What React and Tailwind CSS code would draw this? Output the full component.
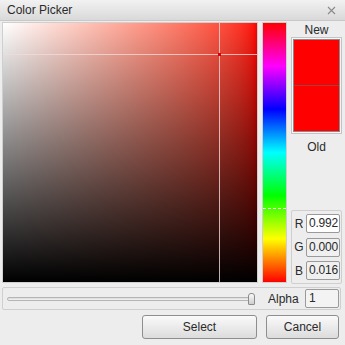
export default function App() {
  return (
    <div className="w-[345px] h-[345px] bg-[#ededed] flex flex-col text-[12px] text-[#2a2a2a] overflow-hidden" style={{ fontFamily: '"Liberation Sans", Arial, sans-serif' }}>
      {/* title bar */}
      <div className="h-[21px] flex items-center justify-between px-[7px] bg-gradient-to-b from-[#f2f2f2] to-[#d9d9d9] border-b border-[#c8c8c8]">
        <span className="text-[12px] text-[#2a2a2a]">Color Picker</span>
        <svg width="9" height="9" viewBox="0 0 9 9" className="mr-[2px]">
          <path d="M1 1L8 8M8 1L1 8" stroke="#8a8a8a" strokeWidth="1.1" />
        </svg>
      </div>

      <div className="flex mt-[1px] pl-[2px]">
        {/* saturation / value square */}
        <div className="border border-[#cfcfcf]">
          <div className="relative w-[254px] h-[259px] bg-gradient-to-r from-white to-[#ff0000]">
            <div className="absolute inset-0 bg-gradient-to-b from-transparent to-black" />
            <div className="absolute left-[216px] top-0 bottom-0 w-[1px] bg-[#f3dada]/80" />
            <div className="absolute top-[31px] left-0 right-0 h-[1px] bg-[#f3dada]/80" />
            <div className="absolute left-[215px] top-[30px] w-[3px] h-[3px] bg-[#dd0000]" />
          </div>
        </div>

        {/* hue bar */}
        <div className="ml-[4px] border border-[#cfcfcf]">
          <div className="relative w-[23px] h-[259px] bg-[linear-gradient(to_bottom,#ff0000_0%,#ff00ff_16.67%,#0000ff_33.33%,#00ffff_50%,#00ff00_66.67%,#ffff00_83.33%,#ff0000_100%)]">
            <div className="absolute top-[185px] left-0 right-0 h-[1px] border-t border-dashed border-white/90" />
          </div>
        </div>

        {/* right column */}
        <div className="ml-[4px] w-[51px] flex flex-col">
          <div className="text-center h-[14px] leading-[14px] mt-[1px]">New</div>
          <div className="border border-[#c4c4c4] bg-[#f6f6f6] p-[1px] h-[97px] flex flex-col">
            <div className="flex-1 bg-[#ff0000] border border-[#8a8a8a] flex flex-col">
              <div className="flex-1 bg-[#fe0000]" />
              <div className="h-[1px] bg-[#a04040]" />
              <div className="flex-1 bg-[#ff0000]" />
            </div>
          </div>
          <div className="text-center mt-[4px]">Old</div>

          <div className="mt-auto mb-[-1px] h-[74px] border border-[#cfcfcf] rounded-[2px] flex flex-col justify-between py-[3px] pr-[1px]">
            {[['R', '0.992', true], ['G', '0.000', false], ['B', '0.016', false]].map(([l, v, w]) => (
              <div key={l} className="flex items-center">
                <span className="w-[14px] text-center text-[12px]">{l}</span>
                <div className={`w-[34px] h-[19px] border border-[#9a9a9a] rounded-[2px] pl-[2px] leading-[17px] text-[12px] tracking-[-0.2px] ${w ? 'bg-white' : 'bg-[#f0f0f0]'}`}>{v}</div>
              </div>
            ))}
          </div>
        </div>
      </div>

      {/* alpha row */}
      <div className="mt-[4px] mx-[2px] w-[339px] h-[23px] border border-[#cfcfcf] rounded-[2px] flex items-center pl-[4px] pr-[1px]">
        <div className="relative w-[244px] h-[14px] flex items-center">
          <div className="w-full h-[4px] rounded-full border border-[#b5b5b5] bg-gradient-to-b from-[#d8d8d8] to-[#f4f4f4]" />
          <div className="absolute right-[-4px] top-[1px] w-[7px] h-[12px] rounded-t-[3px] rounded-b-[1px] border border-[#8c8c8c] bg-gradient-to-b from-[#fafafa] to-[#cfcfcf]" />
        </div>
        <span className="ml-[17px] text-[12px]">Alpha</span>
        <div className="ml-auto w-[34px] h-[19px] border border-[#9a9a9a] rounded-[2px] bg-[#f3f3f3] px-[3px] leading-[17px]">1</div>
      </div>

      {/* buttons */}
      <div className="flex justify-end gap-[9px] mt-[5px] pr-[6px]">
        <button className="w-[115px] h-[24px] border border-[#8e8e8e] rounded-[3px] bg-gradient-to-b from-[#fafafa] to-[#dcdcdc] text-[12px] text-[#2a2a2a]">Select</button>
        <button className="w-[73px] h-[24px] border border-[#8e8e8e] rounded-[3px] bg-gradient-to-b from-[#fafafa] to-[#dcdcdc] text-[12px] text-[#2a2a2a]">Cancel</button>
      </div>
    </div>
  );
}
